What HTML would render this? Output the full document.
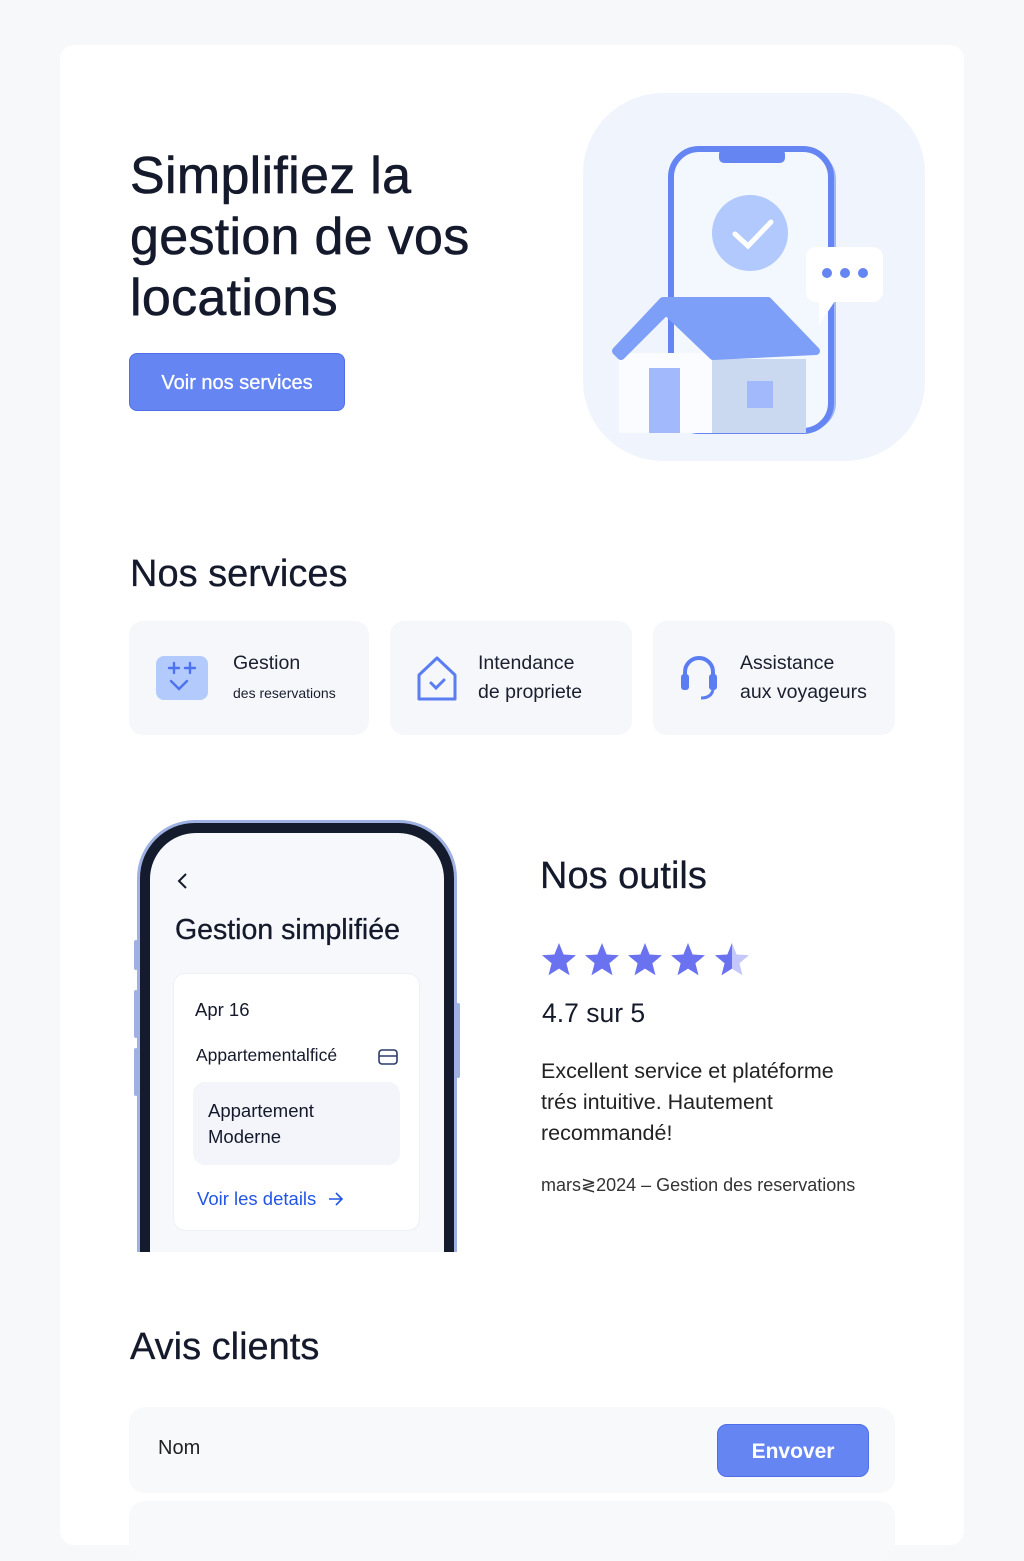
<!DOCTYPE html>
<html><head><meta charset="utf-8"><style>
*{margin:0;padding:0;box-sizing:border-box}
body{width:1024px;height:1536px;background:#f7f8fa;font-family:"Liberation Sans",sans-serif;color:#151a2b;position:relative;overflow:hidden}
.card{position:absolute;left:60px;top:45px;width:904px;height:1500px;background:#fff;border-radius:14px}
.a{position:absolute}
h1{position:absolute;left:130px;top:146px;font-size:52px;line-height:61px;font-weight:400;letter-spacing:0.3px;color:#141a2c;-webkit-text-stroke:0.6px #141a2c}
.btn{position:absolute;left:129px;top:353px;width:216px;height:58px;background:#6585f3;border:1px solid #4f6ee8;border-radius:8px;color:#fff;font-size:20px;text-align:center;line-height:58px;-webkit-text-stroke:0.3px #fff}
h2{position:absolute;font-weight:400;font-size:38px;color:#141a2c;-webkit-text-stroke:0.3px #141a2c}
.svc{position:absolute;top:621px;height:114px;background:#f6f7fb;border-radius:14px}
.svc .t{position:absolute;font-size:19.5px;line-height:29px;color:#1a1f2e}
</style></head><body>
<div class="card"></div>
<h1>Simplifiez la<br>gestion de vos<br>locations</h1>
<div class="btn">Voir nos services</div>

<svg class="a" style="left:583px;top:93px" width="342" height="368" viewBox="0 0 342 368">
<rect x="0" y="0" width="342" height="368" rx="80" fill="#eff4fd"/>
<rect x="91" y="58" width="162" height="280" rx="28" fill="#a0b8fa"/>
<rect x="88" y="56" width="160" height="282" rx="28" fill="#f3f7fe" stroke="#6585f2" stroke-width="6"/>
<rect x="136" y="56" width="66" height="14" rx="5" fill="#6585f2"/>
<circle cx="167" cy="140" r="38" fill="#b1c9fd"/>
<path d="M152 141 L165 153 L188 129" stroke="#fff" stroke-width="5" fill="none" stroke-linecap="round"/>
<path d="M236 205 L236 232 L252 208Z" fill="#fff"/>
<rect x="223" y="154" width="77" height="55" rx="10" fill="#fff"/>
<circle cx="244" cy="180" r="5" fill="#6585f2"/><circle cx="262" cy="180" r="5" fill="#6585f2"/><circle cx="280" cy="180" r="5" fill="#6585f2"/>
<rect x="36" y="260" width="95" height="80" fill="#fbfcff"/>
<rect x="129" y="266" width="94" height="74" fill="#cad9ef"/>
<rect x="66" y="275" width="31" height="65" fill="#a2bafc"/>
<rect x="164" y="288" width="26" height="27" fill="#a2bafc"/>
<path d="M33 258 L80 208 L185 208 L233 258 L130 263 L83 218 L38 263 Z" fill="#7e9ff7" stroke="#7e9ff7" stroke-width="8" stroke-linejoin="round"/>
</svg>

<h2 style="left:130px;top:553px">Nos services</h2>
<div class="svc" style="left:129px;width:240px">
 <svg class="a" style="left:27px;top:35px" width="52" height="44" viewBox="0 0 52 44"><rect width="52" height="44" rx="8" fill="#b3cafd"/><path d="M13 12h10M18 7v10M29 12h10M34 7v10M15 25l8 8 8-8" stroke="#4d72ee" stroke-width="2.4" fill="none" stroke-linecap="round"/></svg>
 <div class="t" style="left:104px;top:28px">Gestion</div>
 <div class="t" style="left:104px;top:58px;font-size:14px">des reservations</div>
</div>
<div class="svc" style="left:390px;width:242px">
 <svg class="a" style="left:26px;top:34px" width="42" height="48" viewBox="0 0 42 48"><path d="M3 20 L21 3 L39 20 V44 H3Z" fill="none" stroke="#5a7ef2" stroke-width="3" stroke-linejoin="round"/><path d="M15 28l5 5 8-8" stroke="#5a7ef2" stroke-width="3" fill="none" stroke-linecap="round"/></svg>
 <div class="t" style="left:88px;top:28px">Intendance<br>de propriete</div>
</div>
<div class="svc" style="left:653px;width:242px">
 <svg class="a" style="left:26px;top:33px" width="40" height="48" viewBox="0 0 40 48"><path d="M6 24 V18 A14 14 0 0 1 34 18 V24" fill="none" stroke="#5a7ef2" stroke-width="4"/><rect x="2" y="20" width="8" height="16" rx="3" fill="#5a7ef2"/><rect x="30" y="20" width="8" height="16" rx="3" fill="#5a7ef2"/><path d="M34 36 Q32 44 22 44" stroke="#5a7ef2" stroke-width="3" fill="none"/></svg>
 <div class="t" style="left:87px;top:28px">Assistance<br>aux voyageurs</div>
</div>

<!-- phone -->
<div class="a" style="left:130px;top:815px;width:336px;height:437px;overflow:hidden">
<div class="a" style="left:7px;top:5px;width:320px;height:500px;border-radius:58px;background:#9fb1e3;"></div>
<div class="a" style="left:10px;top:8px;width:314px;height:500px;border-radius:55px;background:#141b2c;"></div>
<div class="a" style="left:20px;top:18px;width:294px;height:500px;border-radius:46px;background:#f6f8fc;"></div>
<div class="a" style="left:4px;top:125px;width:4px;height:30px;background:#9fb1e3;border-radius:2px"></div>
<div class="a" style="left:4px;top:175px;width:4px;height:48px;background:#9fb1e3;border-radius:2px"></div>
<div class="a" style="left:4px;top:233px;width:4px;height:48px;background:#9fb1e3;border-radius:2px"></div>
<div class="a" style="left:326px;top:188px;width:4px;height:75px;background:#9fb1e3;border-radius:2px"></div>
</div>
<svg class="a" style="left:176px;top:872px" width="12" height="18" viewBox="0 0 12 18"><path d="M10 2 L3 9 L10 16" stroke="#141a2c" stroke-width="2" fill="none"/></svg>
<div class="a" style="left:175px;top:914px;font-size:28.5px;color:#141a2c;-webkit-text-stroke:0.3px #141a2c">Gestion simplifiée</div>
<div class="a" style="left:173px;top:973px;width:247px;height:258px;background:#fff;border:1px solid #edf0f5;border-radius:12px"></div>
<div class="a" style="left:195px;top:999px;font-size:18.5px">Apr 16</div>
<div class="a" style="left:196px;top:1045px;font-size:17.5px">Appartementalficé</div>
<svg class="a" style="left:378px;top:1049px" width="20" height="16" viewBox="0 0 20 16"><rect x="1" y="1" width="18" height="14" rx="3" fill="none" stroke="#2c3c6a" stroke-width="1.6"/><path d="M1 7h18" stroke="#2c3c6a" stroke-width="1.6"/></svg>
<div class="a" style="left:193px;top:1082px;width:207px;height:83px;background:#f3f5fa;border-radius:12px"></div>
<div class="a" style="left:208px;top:1098px;font-size:18.5px;line-height:26px">Appartement<br>Moderne</div>
<div class="a" style="left:197px;top:1188px;font-size:18.5px;color:#2255e6">Voir les details</div>
<svg class="a" style="left:327px;top:1191px" width="18" height="16" viewBox="0 0 18 16"><path d="M2 8h13M9 2l6 6-6 6" stroke="#2255e6" stroke-width="1.6" fill="none"/></svg>

<h2 style="left:540px;top:855px">Nos outils</h2>
<svg class="a" style="left:541px;top:941px" width="212" height="38" viewBox="0 0 212 38">
<defs><path id="s" d="M18 2 L22.6 13.5 L35 14.3 L25.4 22.2 L28.5 34.3 L18 27.6 L7.5 34.3 L10.6 22.2 L1 14.3 L13.4 13.5Z"/>
<clipPath id="h"><rect x="0" y="0" width="18" height="38"/></clipPath></defs>
<use href="#s" fill="#6b72f0"/><use href="#s" x="43" fill="#6b72f0"/><use href="#s" x="86" fill="#6b72f0"/><use href="#s" x="129" fill="#6b72f0"/>
<use href="#s" x="173" fill="#c3c7fb"/><g transform="translate(173 0)"><use href="#s" fill="#6b72f0" clip-path="url(#h)"/></g>
</svg>
<div class="a" style="left:542px;top:998px;font-size:26.5px">4.7 sur 5</div>
<div class="a" style="left:541px;top:1056px;font-size:21.5px;line-height:31px;color:#222">Excellent service et platéforme<br>trés intuitive. Hautement<br>recommandé!</div>
<div class="a" style="left:541px;top:1175px;font-size:18px;color:#333">mars≷2024 – Gestion des reservations</div>

<h2 style="left:130px;top:1326px">Avis clients</h2>
<div class="a" style="left:129px;top:1407px;width:766px;height:86px;background:#f8f9fb;border-radius:16px"></div>
<div class="a" style="left:158px;top:1437px;font-size:20px;color:#222">Nom</div>
<div class="a" style="left:717px;top:1424px;width:152px;height:53px;background:#6585f3;border:1px solid #4f6ee8;border-radius:10px;color:#fff;font-size:21px;font-weight:700;text-align:center;line-height:53px">Envover</div>
<div class="a" style="left:129px;top:1501px;width:766px;height:60px;background:#f8f9fb;border-radius:16px"></div>
</body></html>
